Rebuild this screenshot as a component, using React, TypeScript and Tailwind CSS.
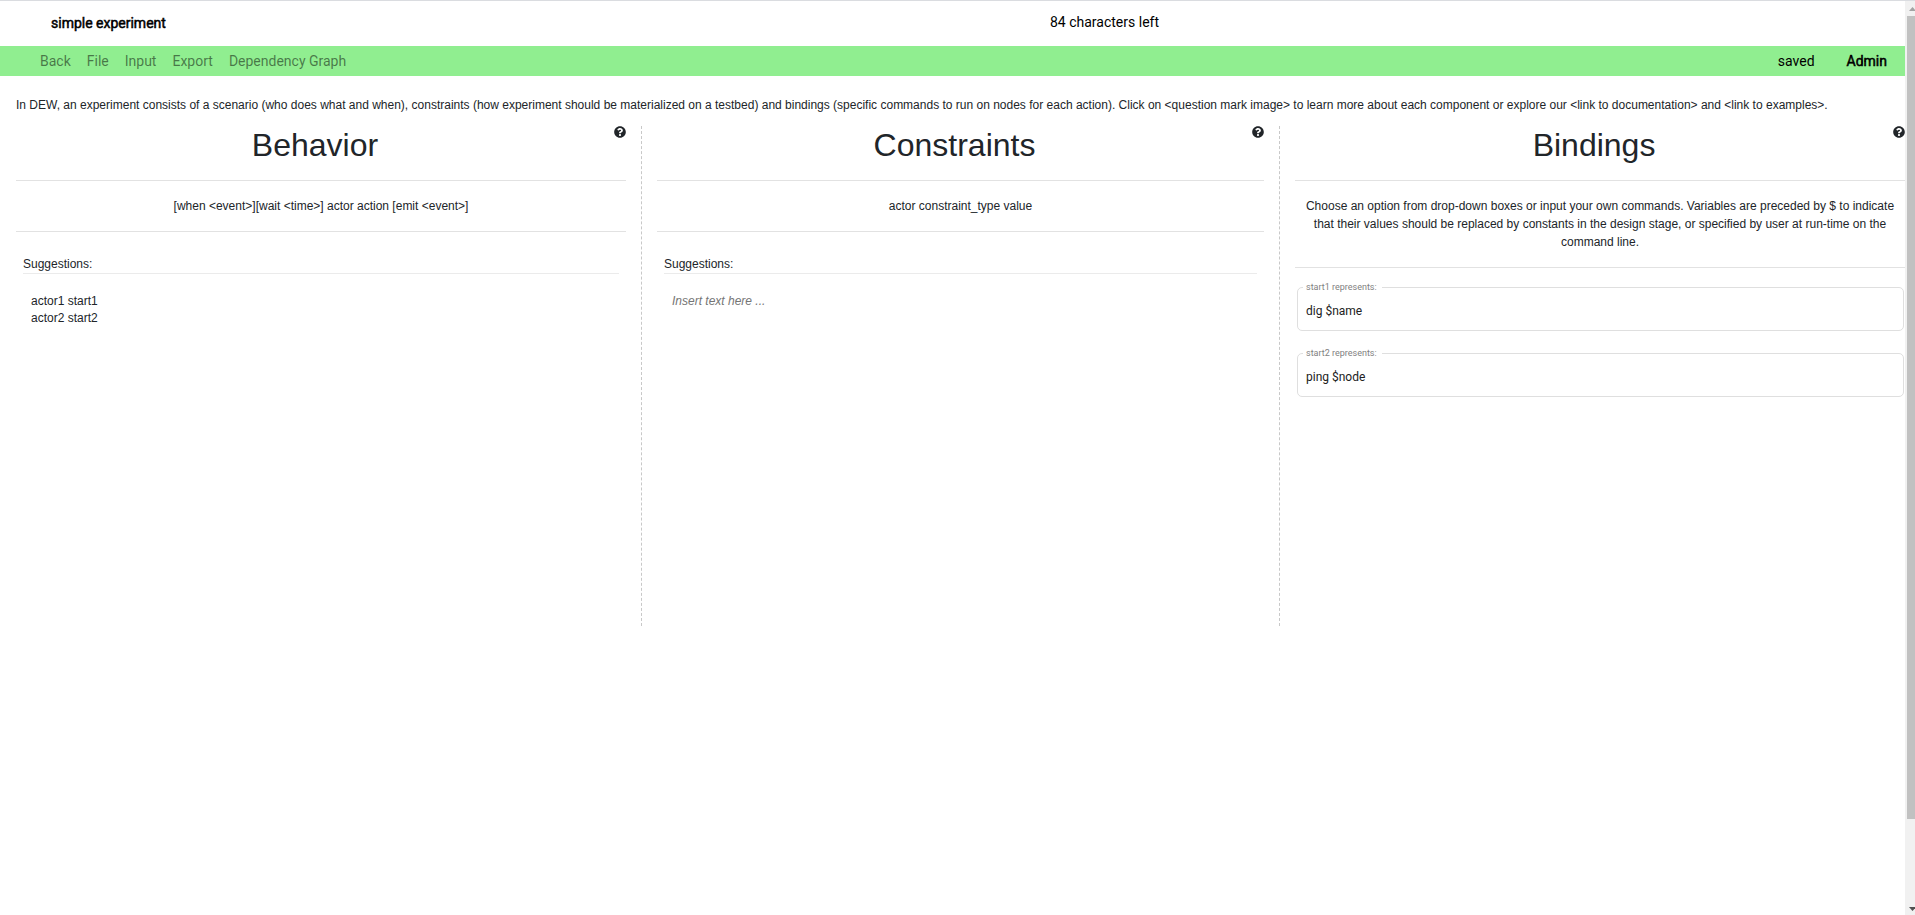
import type { ReactNode } from "react";
import { FaQuestionCircle } from "react-icons/fa";

const menu = ["Back", "File", "Input", "Export", "Dependency Graph"];

function Panel({ title, hint, className, children }: { title: string; hint: string; className: string; children: ReactNode }) {
  return (
    <section className={className}>
      <div className="flex h-[54px] items-start">
        <h1 className="flex-1 text-center text-[32px] leading-[38.4px]">{title}</h1>
        <FaQuestionCircle className="h-3 w-3 shrink-0" />
      </div>
      <p className="border-y border-[#e2e2e2] py-4 text-center leading-[18px]">{hint}</p>
      {children}
    </section>
  );
}

function Suggestions({ children }: { children: ReactNode }) {
  return (
    <div className="pt-[23px]">
      <div className="mx-[7px] border-b border-[#ebebeb] leading-[18px]">Suggestions:</div>
      <div className="px-[15px] pt-[19px] leading-[17px]">{children}</div>
    </div>
  );
}

function Field({ label, value }: { label: string; value: string }) {
  return (
    <div className="relative flex h-11 items-center rounded-[5px] border border-[#dfdfdf] pl-2 font-['Roboto',sans-serif] text-[12px]">
      <span className="absolute -top-[6px] left-[5px] bg-white pr-[5px] pl-[3px] text-[9px] leading-[11px] text-[#7f7f7f]">{label}</span>
      <span className="pt-1 leading-4 text-[#212121]">{value}</span>
    </div>
  );
}

export default function App() {
  return (
    <div className="flex h-[915px] w-[1915px] flex-col overflow-hidden border-t border-[#dadce0] bg-white font-['Liberation_Sans',Arial,sans-serif] text-[12px] text-[#212529]">
      <div className="flex min-h-0 flex-1">
        <div className="w-[1905px] shrink-0">
          <header className="flex h-[45px] font-['Roboto',sans-serif] text-[14px] leading-5 text-black">
            <span className="w-[999px] pt-3 pl-[51px] [-webkit-text-stroke:0.5px_black]">simple experiment</span>
            <span className="pt-[11px] pl-[51px]">84 characters left</span>
          </header>
          <nav className="flex h-[30px] items-center bg-[#90ee90] pr-[18px] pl-10 font-['Roboto',sans-serif] text-[14px] leading-5 text-black">
            <ul className="flex flex-1 gap-4 text-black/50">
              {menu.map((item) => (
                <li key={item}>{item}</li>
              ))}
            </ul>
            <span className="mr-8">saved</span>
            <span className="[-webkit-text-stroke:0.5px_black]">Admin</span>
          </nav>
          <p className="mt-5 mb-3 pl-4 leading-[18px] whitespace-nowrap">
            {
              "In DEW, an experiment consists of a scenario (who does what and when), constraints (how experiment should be materialized on a testbed) and bindings (specific commands to run on nodes for each action). Click on <question mark image> to learn more about each component or explore our <link to documentation> and <link to examples>."
            }
          </p>
          <main className="flex h-[500px]">
            <Panel className="w-[641px] pr-[15px] pl-4" title="Behavior" hint="[when <event>][wait <time>] actor action [emit <event>]">
              <Suggestions>
                <p>actor1 start1</p>
                <p>actor2 start2</p>
              </Suggestions>
            </Panel>
            <Panel className="w-[638px] border-l border-dashed border-[#c8c8c8] pr-[15px] pl-[15px]" title="Constraints" hint="actor constraint_type value">
              <Suggestions>
                <p className="text-[#757575] italic">Insert text here ...</p>
              </Suggestions>
            </Panel>
            <Panel
              className="w-[626px] border-l border-dashed border-[#c8c8c8] pl-[15px]"
              title="Bindings"
              hint="Choose an option from drop-down boxes or input your own commands. Variables are preceded by $ to indicate that their values should be replaced by constants in the design stage, or specified by user at run-time on the command line."
            >
              <div className="flex flex-col gap-[22px] pt-[19px] pr-px pl-[2px]">
                <Field label="start1 represents:" value="dig $name" />
                <Field label="start2 represents:" value="ping $node" />
              </div>
            </Panel>
          </main>
        </div>
        <div className="flex w-[10px] flex-col bg-[#f1f1f1] pl-[2px]">
          <svg className="h-[15px] w-2" viewBox="0 0 8 15">
            <path d="M2 10 L5.5 6 L9 10 Z" fill="#a3a3a3" />
          </svg>
          <div className="h-[803px] bg-[#c1c1c1]" />
          <div className="flex-1" />
          <svg className="h-[15px] w-2" viewBox="0 0 8 15">
            <path d="M2 7 L5.5 11 L9 7 Z" fill="#505050" />
          </svg>
        </div>
      </div>
    </div>
  );
}
